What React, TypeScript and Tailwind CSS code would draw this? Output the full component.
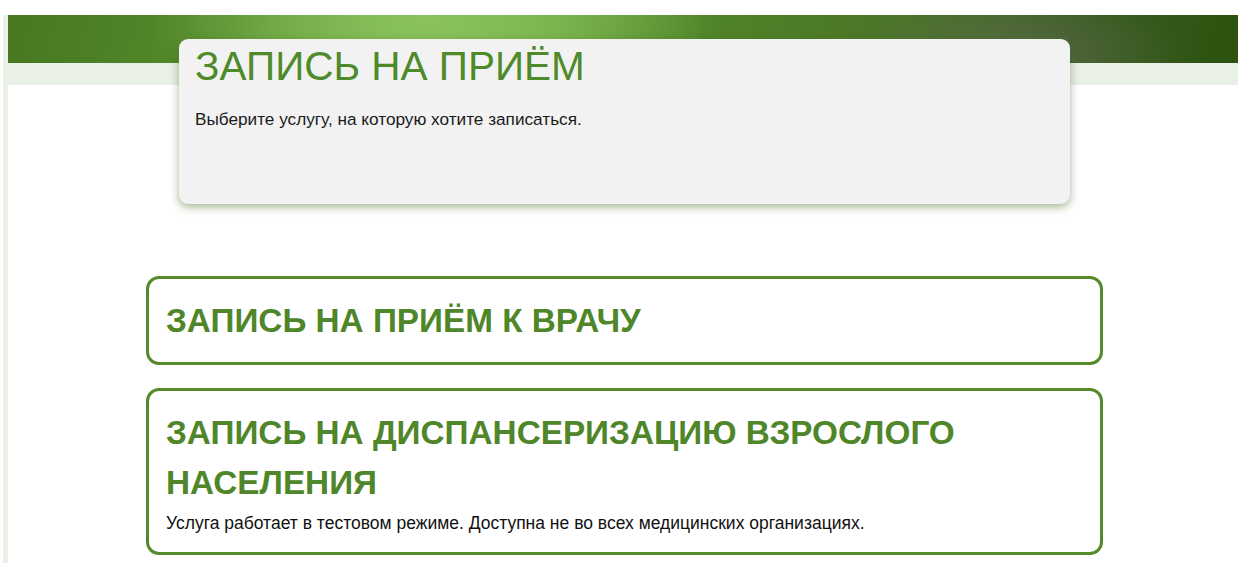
import React from "react";

interface Service {
  title: string;
  note?: string;
}

const services: Service[] = [
  { title: "Запись на приём к врачу" },
  {
    title: "Запись на диспансеризацию взрослого населения",
    note: "Услуга работает в тестовом режиме. Доступна не во всех медицинских организациях.",
  },
];

const ServiceCard = ({ service }: { service: Service }) => (
  <a
    href="#"
    className="block rounded-[13px] border-[3px] border-[#548a2c] bg-white pl-[17px] pr-[24px] pt-[17px] pb-[16px] no-underline"
  >
    <h2 className="text-[33.3px] font-bold uppercase leading-[50px] text-[#4f8629]">
      {service.title}
    </h2>
    {service.note && (
      <p className="mt-[5px] mb-[3px] text-[17.5px] leading-[20px] text-[#111]">{service.note}</p>
    )}
  </a>
);

export default function App() {
  return (
    <div className="min-h-screen bg-white pt-[15px] font-['Liberation_Sans',Arial,sans-serif]">
      <div className="ml-[3px] min-h-[548px] bg-[#e9f0e6] pl-[5px]">
        {/* header stripe */}
        <div className="h-[48px] bg-[radial-gradient(ellipse_170px_60px_at_1010px_38px,rgba(115,115,105,0.45),transparent),radial-gradient(ellipse_280px_90px_at_420px_8px,#8ac35c,transparent),linear-gradient(100deg,#477820_0%,#558b2c_18%,#76b14a_33%,#68a33d_45%,#4f8227_58%,#4b7428_72%,#3b5d23_86%,#2c520e_100%)]" />
        <div className="h-[22px]" />

        <main className="flow-root min-h-[478px] bg-white pl-[3px] pb-[10px]">
          <section className="relative z-10 mx-auto -mt-[46px] h-[165px] w-[891px] rounded-[9px] bg-[#f2f2f2] pl-[16px] pt-[4px] shadow-[0_3px_9px_rgba(70,110,40,0.5)]">
            <h1 className="text-[40.5px] leading-[46px] uppercase text-[#4e8a2a]">Запись на приём</h1>
            <p className="mt-[20px] text-[17.2px] leading-[20px] text-[#1a1a1a]">
              Выберите услугу, на которую хотите записаться.
            </p>
          </section>

          <div className="mx-auto mt-[72px] flex w-[957px] flex-col gap-[23px]">
            {services.map((s) => (
              <ServiceCard key={s.title} service={s} />
            ))}
          </div>
        </main>
      </div>
    </div>
  );
}
